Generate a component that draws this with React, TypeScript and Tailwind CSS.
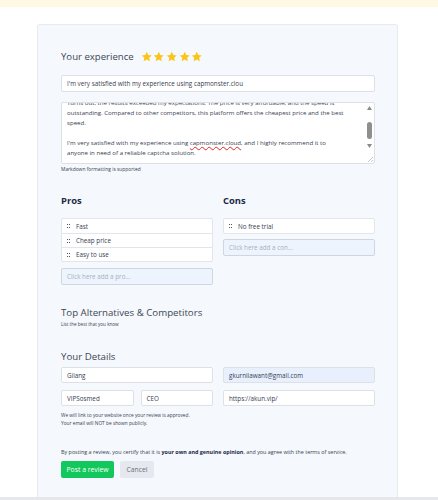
import React from "react";

const font = { fontFamily: '"Open Sans", "Noto Sans", sans-serif' };

function StarIcon() {
  return (
    <svg width="11.5" height="11.5" viewBox="0 0 24 24" className="shrink-0">
      <path
        d="M12 1.8l3.1 6.6 7.2.9-5.3 5 1.4 7.1L12 17.9l-6.4 3.5 1.4-7.1-5.3-5 7.2-.9z"
        fill="#fcc419"
      />
    </svg>
  );
}

function Handle() {
  return (
    <svg width="3" height="4" viewBox="0 0 3 4" className="shrink-0">
      <rect x="0" y="0" width="1" height="1" fill="#4b5563" />
      <rect x="2" y="0" width="1" height="1" fill="#4b5563" />
      <rect x="0" y="3" width="1" height="1" fill="#4b5563" />
      <rect x="2" y="3" width="1" height="1" fill="#4b5563" />
    </svg>
  );
}

function ItemList({ items }: { items: string[] }) {
  return (
    <div className="flex flex-col rounded-[2px] border border-[#e2e6eb] bg-white">
      {items.map((it, i) => (
        <div
          key={it}
          className={`flex h-[14px] items-center gap-[6px] pl-[5px] text-[6.3px] text-[#374151] ${
            i > 0 ? "border-t border-[#e2e6eb]" : ""
          }`}
        >
          <Handle />
          <span>{it}</span>
        </div>
      ))}
    </div>
  );
}

function AddField({ placeholder }: { placeholder: string }) {
  return (
    <div className="flex h-[17px] items-center rounded-[2px] border border-[#cfd6de] bg-[#eef4fd] pl-[5px] text-[6.3px] text-[#a8b0bb]">
      {placeholder}
    </div>
  );
}

function Field({ value, tint }: { value: string; tint?: boolean }) {
  return (
    <div
      className={`flex h-[16px] min-w-0 flex-1 items-center rounded-[2px] border border-[#dde1e6] pl-[5px] text-[6.3px] text-[#374151] ${
        tint ? "bg-[#e8f0fe]" : "bg-white"
      }`}
    >
      {value}
    </div>
  );
}

export default function App() {
  return (
    <div className="flex min-h-[500px] w-[438px] flex-col bg-white" style={font}>
      <div className="h-[7px] bg-[#fff9e3]" />
      <div className="flex flex-1 flex-col pl-[37px] pr-[40px] pt-[17px]">
        <div className="flex flex-1 flex-col rounded-t-[3px] border border-b-0 border-[#e7ebf0] bg-[#f5f8fc] pl-[23px] pr-[22px] pt-[24px]">
          {/* rating */}
          <div className="flex h-[16px] items-center gap-[7px]">
            <span className="text-[9.6px] text-[#3d4757]">Your experience</span>
            <div className="flex gap-[1.2px]">
              {[0, 1, 2, 3, 4].map((i) => (
                <StarIcon key={i} />
              ))}
            </div>
          </div>

          <div className="mt-[10px] flex h-[17px] items-center rounded-[2px] border border-[#dde1e6] bg-white pl-[5px] text-[6.3px] text-[#374151]">
            I'm very satisfied with my experience using capmonster.clou
          </div>

          {/* review body */}
          <div className="mt-[10px] flex h-[62px] rounded-[2px] border border-[#dde1e6] bg-white">
            <div className="min-w-0 flex-1 overflow-hidden pl-[5px] pr-[3px]">
              <div className="-mt-[5px] text-[6.1px] leading-[10px] text-[#374151]">
                <p>Turns out, the results exceeded my expectations. The price is very affordable, and the speed is</p>
                <p>outstanding. Compared to other competitors, this platform offers the cheapest price and the best</p>
                <p>speed.</p>
                <p>&nbsp;</p>
                <p>
                  I'm very satisfied with my experience using{" "}
                  <span className="underline decoration-[#e02424] decoration-wavy decoration-[0.6px] underline-offset-[1px]">
                    capmonster.cloud
                  </span>
                  , and I highly recommend it to
                </p>
                <p>anyone in need of a reliable captcha solution.</p>
              </div>
            </div>
            <div className="flex w-[9px] flex-col items-center pt-[3px]">
              <svg width="5" height="4" viewBox="0 0 5 4">
                <path d="M2.5 0L5 4H0z" fill="#8a8a8a" />
              </svg>
              <div className="mt-[12px] h-[17px] w-[5px] rounded-[3px] bg-[#8f8f8f]" />
              <svg width="5" height="4" viewBox="0 0 5 4" className="mt-[5px]">
                <path d="M0 0h5L2.5 4z" fill="#8a8a8a" />
              </svg>
              <div className="mt-auto mb-[1px] flex h-[7px] w-[7px] items-end justify-end">
                <svg width="6" height="6" viewBox="0 0 6 6">
                  <path d="M6 1L1 6M6 4L4 6" stroke="#9ca3af" strokeWidth="0.6" />
                </svg>
              </div>
            </div>
          </div>
          <p className="mt-[2px] text-[4.9px] text-[#374151]">Markdown formatting is supported</p>

          {/* pros and cons */}
          <div className="mt-[21px] grid grid-cols-2 gap-[10px]">
            <div className="flex flex-col">
              <h3 className="text-[9.4px] font-bold leading-[14px] text-[#1c2a48]">Pros</h3>
              <div className="mt-[10px]">
                <ItemList items={["Fast", "Cheap price", "Easy to use"]} />
              </div>
              <div className="mt-[6px]">
                <AddField placeholder="Click here add a pro..." />
              </div>
            </div>
            <div className="flex flex-col">
              <h3 className="text-[9.4px] font-bold leading-[14px] text-[#1c2a48]">Cons</h3>
              <div className="mt-[10px]">
                <ItemList items={["No free trial"]} />
              </div>
              <div className="mt-[5px]">
                <AddField placeholder="Click here add a con..." />
              </div>
            </div>
          </div>

          {/* alternatives */}
          <h2 className="mt-[21px] text-[9.7px] leading-[14px] text-[#3d4757]">Top Alternatives &amp; Competitors</h2>
          <p className="mt-[1px] text-[4.6px] text-[#374151]">List the best that you know</p>

          {/* details */}
          <h2 className="mt-[22px] text-[9.7px] leading-[14px] text-[#3d4757]">Your Details</h2>
          <div className="mt-[3px] grid grid-cols-2 gap-[10px]">
            <Field value="Gilang" />
            <Field value="gkurniiawant@gmail.com" tint />
          </div>
          <div className="mt-[7px] grid grid-cols-2 gap-[10px]">
            <div className="flex gap-[7px]">
              <Field value="VIPSosmed" />
              <Field value="CEO" />
            </div>
            <Field value="https://akun.vip/" />
          </div>
          <div className="mt-[5px] text-[4.8px] leading-[8px] text-[#374151]">
            <p>We will link to your website once your review is approved.</p>
            <p>Your email will NOT be shown publicly.</p>
          </div>

          <p className="mt-[21px] text-[5.4px] text-[#374151]">
            By posting a review, you certify that it is{" "}
            <span className="font-bold text-[#1c2a48]">your own and genuine opinion</span>, and you agree with the
            terms of service.
          </p>
          <div className="mt-[5px] flex gap-[6px]">
            <button className="flex h-[17px] w-[53px] items-center justify-center rounded-[2px] bg-[#12c75b] text-[6.8px] text-white">
              Post a review
            </button>
            <button className="flex h-[17px] w-[34px] items-center justify-center rounded-[2px] bg-[#e5e8ee] text-[6.8px] text-[#6b7280]">
              Cancel
            </button>
          </div>
        </div>
      </div>
      <div className="h-[3px] bg-[#e5e7eb]" />
    </div>
  );
}
